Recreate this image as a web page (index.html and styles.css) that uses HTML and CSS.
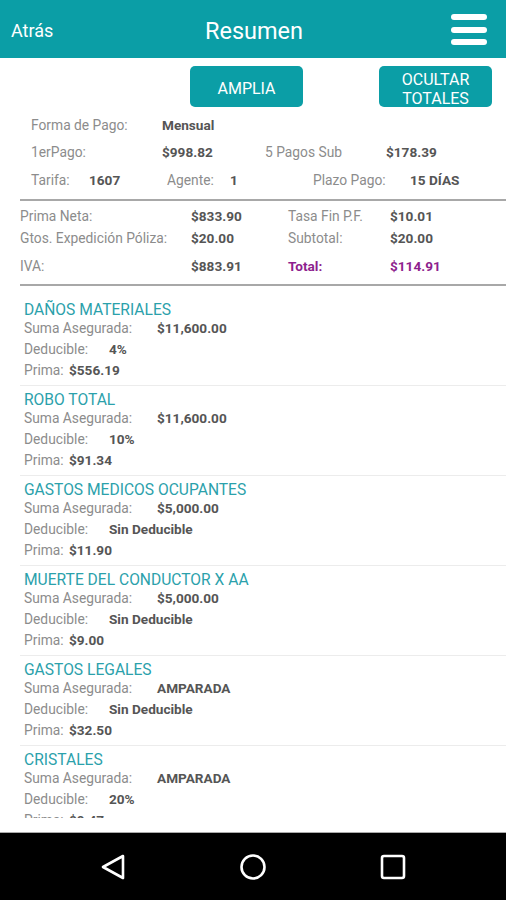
FILE: index.html
```html
<!DOCTYPE html>
<html lang="es">
<head>
    <meta charset="UTF-8">
    <meta name="viewport" content="width=device-width, initial-scale=1.0">
    <title>Resumen</title>
    <link rel="stylesheet" href="styles.css">
</head>
<body>

<div class="screen">
    <!-- barra superior -->
    <div class="topbar">
        <span class="back">Atrás</span>
        <span class="title">Resumen</span>
        <span class="menu"><i></i><i></i><i></i></span>
    </div>

    <div class="content">
        <!-- botones -->
        <div class="actions">
            <button class="btn btn-amplia">AMPLIA</button>
            <button class="btn btn-ocultar">OCULTAR<br>TOTALES</button>
        </div>

        <!-- datos de pago -->
        <div class="info">
            <div class="info-row row-a">
                <span class="lbl">Forma de Pago:</span>
                <span class="val">Mensual</span>
            </div>
            <div class="info-row row-b">
                <span class="lbl">1erPago:</span>
                <span class="val">$998.82</span>
                <span class="lbl">5 Pagos Sub</span>
                <span class="val">$178.39</span>
            </div>
            <div class="info-row row-c">
                <span class="lbl">Tarifa:</span>
                <span class="val">1607</span>
                <span class="lbl">Agente:</span>
                <span class="val">1</span>
                <span class="lbl">Plazo Pago:</span>
                <span class="val">15 DÍAS</span>
            </div>
        </div>

        <!-- totales -->
        <div class="totals">
            <span class="lbl">Prima Neta:</span>
            <span class="val">$833.90</span>
            <span class="lbl">Tasa Fin P.F.</span>
            <span class="val">$10.01</span>

            <span class="lbl">Gtos. Expedición Póliza:</span>
            <span class="val">$20.00</span>
            <span class="lbl">Subtotal:</span>
            <span class="val">$20.00</span>

            <span class="lbl">IVA:</span>
            <span class="val">$883.91</span>
            <span class="val total">Total:</span>
            <span class="val total">$114.91</span>
        </div>

        <!-- coberturas -->
        <div class="coverages" id="coverages"></div>
    </div>

    <!-- barra de navegación -->
    <div class="navbar">
        <svg width="26" height="28" viewBox="0 0 26 28"><path d="M23 3 L3 14 L23 25 Z" fill="none" stroke="#fff" stroke-width="2.6" stroke-linejoin="round"/></svg>
        <svg width="28" height="28" viewBox="0 0 28 28"><circle cx="14" cy="14" r="11.5" fill="none" stroke="#fff" stroke-width="2.6"/></svg>
        <svg width="26" height="26" viewBox="0 0 26 26"><rect x="2" y="2" width="22" height="22" rx="2" fill="none" stroke="#fff" stroke-width="2.6"/></svg>
    </div>
</div>

<script>
// lista de coberturas
const coverages = [
  { name: "DAÑOS MATERIALES", suma: "$11,600.00", deducible: "4%", prima: "$556.19" },
  { name: "ROBO TOTAL", suma: "$11,600.00", deducible: "10%", prima: "$91.34" },
  { name: "GASTOS MEDICOS OCUPANTES", suma: "$5,000.00", deducible: "Sin Deducible", prima: "$11.90" },
  { name: "MUERTE DEL CONDUCTOR X AA", suma: "$5,000.00", deducible: "Sin Deducible", prima: "$9.00" },
  { name: "GASTOS LEGALES", suma: "AMPARADA", deducible: "Sin Deducible", prima: "$32.50" },
  { name: "CRISTALES", suma: "AMPARADA", deducible: "20%", prima: "$9.47" }
];

function renderCoverages() {
  const list = document.getElementById("coverages");
  coverages.forEach(c => {
    const item = document.createElement("div");
    item.className = "coverage";
    item.innerHTML = `
      <div class="cov-title">${c.name}</div>
      <div class="cov-row"><span class="lbl cov-suma">Suma Asegurada:</span><span class="val">${c.suma}</span></div>
      <div class="cov-row"><span class="lbl cov-ded">Deducible:</span><span class="val">${c.deducible}</span></div>
      <div class="cov-row"><span class="lbl cov-prima">Prima:</span><span class="val">${c.prima}</span></div>
    `;
    list.appendChild(item);
  });
}

renderCoverages();
</script>

</body>
</html>
```

FILE: styles.css
```css
html, body {
    margin: 0;
    padding: 0;
}
body {
    font-family: Roboto, 'Liberation Sans', sans-serif;
    background-color: #fff;
}
.screen {
    width: 506px;
    height: 900px;
    display: flex;
    flex-direction: column;
    overflow: hidden;
}
.topbar {
    height: 58px;
    flex: none;
    background-color: #0b9ea6;
    color: #fff;
    display: grid;
    grid-template-columns: 1fr auto 1fr;
    align-items: center;
    padding: 0 19px 0 11px;
}
.back {
    font-size: 18px;
    margin-top: 2px;
}
.title {
    font-size: 23.5px;
    margin-top: 4px;
    margin-left: 10px;
}
.menu {
    display: flex;
    flex-direction: column;
    align-items: flex-end;
    gap: 6.5px;
    margin-top: 1px;
}
.menu i {
    display: block;
    width: 36px;
    height: 6px;
    border-radius: 3px;
    background-color: #fff;
}
.content {
    flex: 1;
    margin-bottom: 14px;
    overflow: hidden;
}
.actions {
    display: flex;
    padding: 8px 14px 0 190px;
    justify-content: space-between;
}
.btn {
    height: 41px;
    background-color: #0b9ea6;
    color: #fff;
    border: none;
    border-radius: 5px;
    font-family: Roboto, 'Liberation Sans', sans-serif;
    font-size: 16px;
    line-height: 19px;
    padding: 0;
}
.btn-amplia {
    width: 113px;
    padding-top: 3px;
}
.btn-ocultar {
    width: 113px;
    padding-top: 4px;
}
.lbl {
    color: #8c8c8c;
    font-size: 13.8px;
}
.val {
    color: #555;
    font-size: 13.6px;
    font-weight: bold;
}
.info {
    padding: 4px 0 5px 31px;
}
.info-row {
    display: flex;
    height: 27.5px;
    align-items: center;
}
.row-a .lbl:first-child {
    width: 131px;
}
.row-b span:nth-child(1) { width: 131px; }
.row-b span:nth-child(2) { width: 103px; }
.row-b span:nth-child(3) { width: 121px; }
.row-c span:nth-child(1) { width: 58px; }
.row-c span:nth-child(2) { width: 78px; }
.row-c span:nth-child(3) { width: 63px; }
.row-c span:nth-child(4) { width: 83px; }
.row-c span:nth-child(5) { width: 97px; }
.totals {
    margin-left: 20px;
    border-top: 2px solid #a8a8a8;
    border-bottom: 2px solid #a8a8a8;
    display: grid;
    grid-template-columns: 171px 97px 102px auto;
    grid-template-rows: 22px 22px 28px;
    align-items: end;
    padding: 4px 0 7px 0;
    line-height: 22px;
}
.totals .total {
    color: #8e1f8e;
}
.coverages {
    margin-top: 10px;
}
.coverage {
    margin-left: 20px;
    padding: 6px 0 4px 4px;
    border-bottom: 1px solid #ececec;
}
.cov-title {
    color: #2ba1ab;
    font-size: 15.6px;
    line-height: 16px;
}
.cov-row {
    display: flex;
    height: 21px;
    align-items: center;
}
.cov-suma { width: 133px; }
.cov-ded { width: 85px; }
.cov-prima { width: 45px; }
.navbar {
    height: 67px;
    flex: none;
    background-color: #000;
    border-top: 1px solid #aaa;
    display: flex;
    align-items: center;
    justify-content: space-between;
    padding: 0 100px 0 100px;
}
```
